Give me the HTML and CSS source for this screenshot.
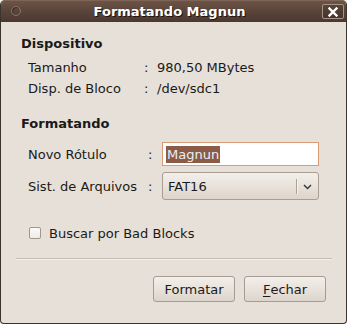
FILE: index.html
```html
<!DOCTYPE html>
<html lang="pt">
<head>
<meta charset="utf-8">
<title>Formatando Magnun</title>
<link rel="stylesheet" href="styles.css">
</head>
<body>
<div class="window">
  <div class="titlebar">
    <span class="menu-dot"></span>
    <span class="title">Formatando Magnun</span>
    <span class="close-btn">
      <svg width="10" height="10" viewBox="0 0 10 10"><path d="M1.5 1.5 L8.5 8.5 M8.5 1.5 L1.5 8.5" stroke="#fff" stroke-width="2.4" stroke-linecap="square"/></svg>
    </span>
  </div>
  <div class="content">
    <div class="heading h1">Dispositivo</div>
    <div class="info-grid">
      <span class="lbl">Tamanho</span><span class="colon">:</span><span class="val">980,50 MBytes</span>
      <span class="lbl">Disp. de Bloco</span><span class="colon">:</span><span class="val">/dev/sdc1</span>
    </div>
    <div class="heading h2">Formatando</div>
    <div class="form-grid">
      <span class="lbl">Novo Rótulo</span><span class="colon">:</span>
      <div class="entry"><span class="sel">Magnun</span></div>
      <span class="lbl">Sist. de Arquivos</span><span class="colon">:</span>
      <div class="combo"><span class="combo-text">FAT16</span><span class="combo-sep"></span><span class="combo-arrow"><svg width="9" height="6" viewBox="0 0 9 6"><path d="M1 1 L4.5 4.5 L8 1" fill="none" stroke="#3a3a3a" stroke-width="1.5"/></svg></span></div>
    </div>
    <label class="check-row"><span class="checkbox"></span><span>Buscar por Bad Blocks</span></label>
    <div class="separator"></div>
    <div class="buttons">
      <span class="btn">Formatar</span>
      <span class="btn"><u>F</u>echar</span>
    </div>
  </div>
</div>
</body>
</html>
```
FILE: styles.css
```css
html, body {
  margin: 0;
  padding: 0;
  background: #f4f2ef;
}
body {
  font-family: "DejaVu Sans", sans-serif;
  font-size: 13px;
  color: #1a1a1a;
}
.window {
  width: 347px;
  height: 324px;
  box-sizing: border-box;
  border: 1px solid #3b332e;
  border-top: none;
  border-radius: 5px 5px 4px 4px;
  overflow: hidden;
  background: #e6e0d8;
  display: flex;
  flex-direction: column;
}
.titlebar {
  height: 22px;
  flex: none;
  display: flex;
  align-items: center;
  background: linear-gradient(#6e5548 0%, #5c463b 45%, #4b382f 100%);
  box-shadow: inset 0 1px 0 #7f6557;
  margin: 0 -1px;
  border-radius: 5px 5px 0 0;
}
.menu-dot {
  width: 8px;
  height: 8px;
  border-radius: 50%;
  margin-left: 11px;
  border: 1px solid #8a7467;
  box-shadow: inset 1px 1px 0 #3a2b24;
  flex: none;
}
.title {
  flex: 1;
  text-align: center;
  font-weight: bold;
  font-size: 13px;
  color: #ffffff;
  text-shadow: 1px 1px 0 #1e1510;
  margin-left: -4px;
  padding-top: 1px;
}
.close-btn {
  width: 20px;
  height: 13px;
  border: 1px solid #a4958b;
  border-radius: 2px;
  margin-right: 3px;
  margin-top: 1px;
  background: linear-gradient(#5a4439, #45332a);
  display: flex;
  align-items: center;
  justify-content: center;
  flex: none;
}
.content {
  padding: 14px 14px 0 20px;
  display: flex;
  flex-direction: column;
}
.heading {
  font-weight: bold;
  font-size: 13px;
  line-height: 16px;
}
.info-grid {
  display: grid;
  grid-template-columns: 116px 13px auto;
  grid-auto-rows: 21px;
  align-items: center;
  margin: 5px 0 0 7px;
}
.h2 {
  margin-top: 17px;
}
.form-grid {
  display: grid;
  grid-template-columns: 120px 14px 157px;
  grid-template-rows: 24px 28px;
  row-gap: 6px;
  align-items: center;
  margin: 10px 0 0 7px;
}
.entry {
  height: 24px;
  box-sizing: border-box;
  border: 1px solid #d99a78;
  background: #ffffff;
  display: flex;
  align-items: center;
  padding-left: 3px;
}
.sel {
  background: #8c5b45;
  color: #e9eef8;
  line-height: 17px;
  padding: 0 1px;
}
.combo {
  height: 28px;
  box-sizing: border-box;
  border: 1px solid #a89e94;
  border-radius: 3px;
  background: linear-gradient(#f3efea 0%, #e8e1d9 55%, #ddd4ca 100%);
  display: flex;
  align-items: center;
}
.combo-text {
  flex: 1;
  padding-left: 5px;
  padding-top: 1px;
}
.combo-sep {
  width: 1px;
  height: 15px;
  background: #aaa197;
  box-shadow: 1px 0 0 #f6f2ee;
}
.combo-arrow {
  width: 21px;
  display: flex;
  justify-content: center;
  padding-top: 1px;
}
.check-row {
  display: flex;
  align-items: center;
  gap: 8px;
  margin: 24px 0 0 8px;
  height: 18px;
}
.checkbox {
  width: 10px;
  height: 10px;
  border: 1px solid #a0968c;
  border-radius: 2px;
  background: linear-gradient(#fbfaf8, #f0ebe6);
}
.separator {
  height: 1px;
  background: #c6bbb0;
  box-shadow: 0 1px 0 #f2eee9;
  margin: 16px 0 0 -5px;
}
.buttons {
  display: flex;
  justify-content: flex-end;
  gap: 9px;
  margin-top: 17px;
  padding-right: 6px;
}
.btn {
  width: 82px;
  height: 26px;
  box-sizing: border-box;
  border: 1px solid #a59b91;
  border-radius: 3px;
  background: linear-gradient(#f2eee9 0%, #e8e1da 55%, #ddd5cc 100%);
  display: flex;
  align-items: center;
  justify-content: center;
}
.btn u {
  text-underline-offset: 2px;
}
```
